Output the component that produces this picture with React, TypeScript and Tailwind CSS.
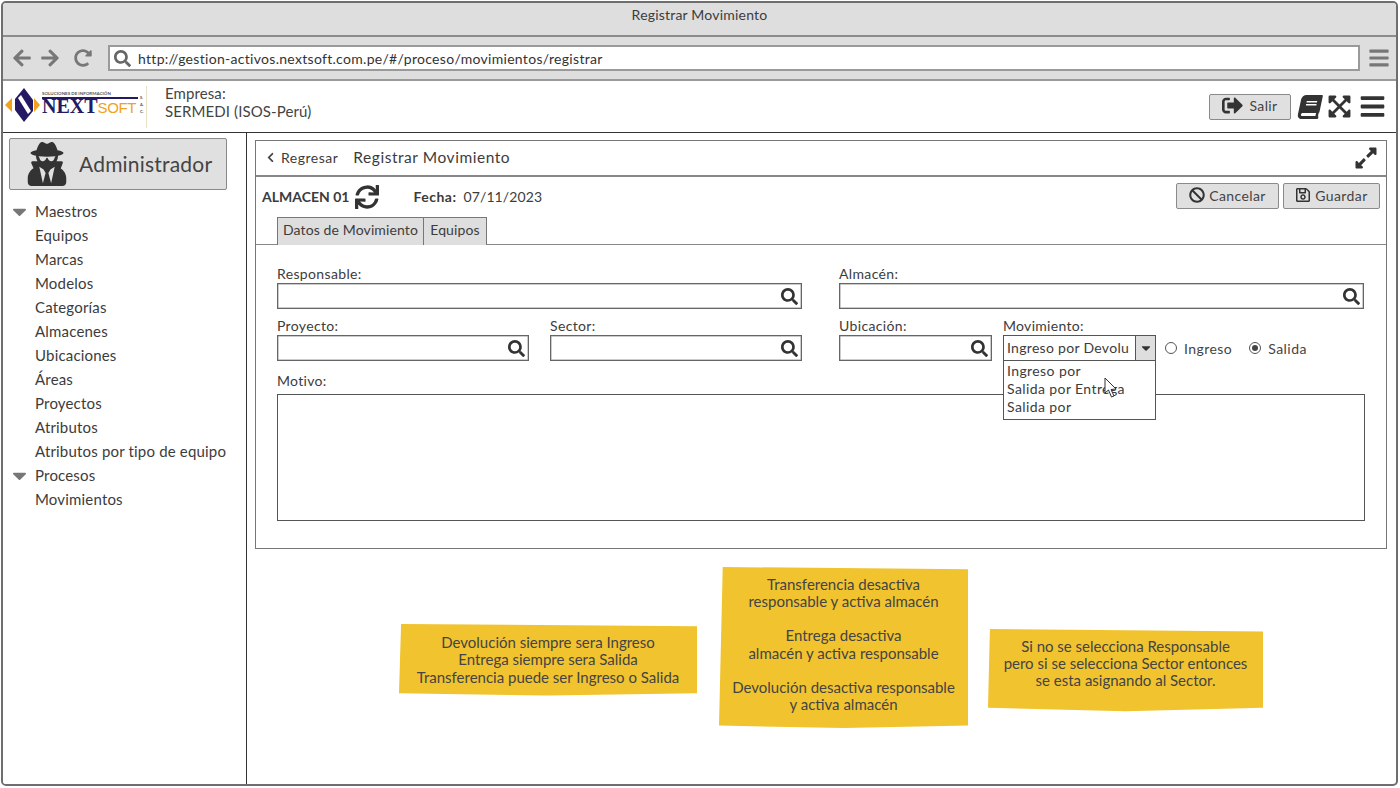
import type { ReactNode } from "react";
import {
  FaArrowLeft,
  FaArrowRight,
  FaBan,
  FaBars,
  FaBook,
  FaCaretDown,
  FaChevronLeft,
  FaExpandAlt,
  FaExpandArrowsAlt,
  FaRedoAlt,
  FaRegSave,
  FaSearch,
  FaSignOutAlt,
  FaSync,
  FaUserSecret,
} from "react-icons/fa";

const menuMaestros = [
  "Equipos",
  "Marcas",
  "Modelos",
  "Categorías",
  "Almacenes",
  "Ubicaciones",
  "Áreas",
  "Proyectos",
  "Atributos",
  "Atributos por tipo de equipo",
];

function SearchField({ label, className }: { label: string; className: string }) {
  return (
    <div className={className}>
      <div className="h-[18px] text-[14px] leading-[18px] tracking-[0.35px]">{label}</div>
      <div className="flex h-[26px] items-center justify-end border border-[#666] bg-white pr-[3px] shadow-[inset_0_0_0_0.5px_#999]">
        <FaSearch className="text-[17px] text-[#333]" />
      </div>
    </div>
  );
}

function GrayButton({ children, className }: { children: ReactNode; className: string }) {
  return (
    <button className={`flex items-center justify-center rounded-[2px] border border-[#8a8a8a] bg-[#e0e0e0] pb-[2px] text-[14px] tracking-[0.4px] text-[#444] ${className}`}>
      {children}
    </button>
  );
}

function Note({ className, children }: { className: string; children: ReactNode }) {
  return (
    <div className={`flex flex-col items-center justify-center bg-[#f1c32e] text-center text-[15px] leading-[17.3px] text-[#444] ${className}`}>
      {children}
    </div>
  );
}

export default function App() {
  return (
    <div className="h-[788px] w-[1400px] overflow-hidden bg-white p-[1px] font-['Lato','Liberation_Sans',sans-serif] text-[#3c3c3c]">
      <div className="flex h-[785px] w-[1397px] flex-col overflow-hidden rounded-[5px] border-2 border-[#6e6e6e]">
        {/* browser chrome */}
        <div className="flex h-[34px] shrink-0 items-center justify-center border-b-2 border-[#8c8c8c] bg-[#dedede] pb-[9px] text-[14px] tracking-[0.2px]">
          Registrar Movimiento
        </div>
        <div className="flex h-[44px] shrink-0 items-center border-b-2 border-[#9a9a9a] bg-[#dedede]">
          <FaArrowLeft className="ml-[9px] text-[20px] text-[#777]" />
          <FaArrowRight className="ml-[8px] text-[20px] text-[#777]" />
          <FaRedoAlt className="ml-[14px] text-[18px] text-[#777]" />
          <div className="ml-[16px] flex h-[26px] w-[1252px] items-center border-2 border-[#9a9a9a] bg-white pl-[4px] text-[14px] tracking-[0.3px] text-[#333]">
            <FaSearch className="mr-[7px] text-[17px] text-[#666]" />
            http://gestion-activos.nextsoft.com.pe/#/proceso/movimientos/registrar
          </div>
          <FaBars className="ml-[8px] text-[22px] text-[#777]" />
        </div>

        {/* app header */}
        <div className="flex h-[52px] shrink-0 items-center border-b border-[#333] bg-white">
          <div className="flex h-[42px] w-[144px] items-center border-r border-[#eadfc4] pb-[4px] pl-[2px]">
            <svg width="35" height="36" viewBox="0 0 35 36" className="shrink-0">
              <polygon points="0,18 7,11 7,25" fill="#f2a11d" />
              <polygon points="35,18 29,11 29,25" fill="#f2a11d" />
              <polygon points="19,1 28,13 28,24 19,35 10,23 10,12" fill="#231a63" />
              <polygon points="13,11 16,8 26,24 23,27" fill="#fff" />
            </svg>
            <div className="ml-[2px] flex w-[96px] flex-col leading-none">
              <span className="border-b-2 border-[#231a63] pb-[1px] text-[4.5px] font-bold whitespace-nowrap text-[#555]">SOLUCIONES DE INFORMACIÓN</span>
              <span className="-mt-[2px] font-['Liberation_Serif',serif] text-[20px] leading-[18px] font-bold whitespace-nowrap text-[#231a63]">
                NEXT<span className="font-['Liberation_Sans',sans-serif] text-[15px] font-normal tracking-[-0.4px] text-[#f2a11d]">SOFT</span>
              </span>
            </div>
            <div className="ml-[2px] flex flex-col text-[4px] leading-[7px] font-bold text-[#555]">
              <span>S.</span>
              <span>A.</span>
              <span>C.</span>
            </div>
          </div>
          <div className="ml-[18px] pb-[9px] text-[15px] leading-[18.5px] tracking-[0.1px] text-[#444]">
            <div>Empresa:</div>
            <div>SERMEDI (ISOS-Perú)</div>
          </div>
          <div className="ml-auto flex items-center">
            <GrayButton className="h-[26px] w-[82px] gap-[6px]">
              <FaSignOutAlt className="text-[21px] text-[#333]" />
              Salir
            </GrayButton>
            <FaBook className="ml-[7px] -skew-x-12 text-[24px] text-[#333]" />
            <FaExpandArrowsAlt className="ml-[5px] text-[25px] text-[#333]" />
            <FaBars className="mr-[10px] ml-[7px] text-[27px] text-[#333]" />
          </div>
        </div>

        <div className="flex min-h-0 flex-1">
          {/* sidebar */}
          <aside className="w-[244px] shrink-0 border-r border-[#333] bg-white">
            <div className="mt-[5px] ml-[6px] flex h-[52px] w-[218px] items-center rounded-[2px] border border-[#8a8a8a] bg-[#e0e0e0]">
              <FaUserSecret className="ml-[15px] text-[44px] text-[#333]" />
              <span className="ml-[10px] text-[21px] tracking-[0.2px] text-[#444]">Administrador</span>
            </div>
            <div className="mt-[9px] text-[15px] leading-[24px] tracking-[0.18px]">
              <div className="flex items-center">
                <FaCaretDown className="ml-[9px] w-[15px] scale-[1.5] text-[#777]" />
                <span className="ml-[8px]">Maestros</span>
              </div>
              {menuMaestros.map((m) => (
                <div key={m} className="pl-[32px] whitespace-nowrap">{m}</div>
              ))}
              <div className="flex items-center">
                <FaCaretDown className="ml-[9px] w-[15px] scale-[1.5] text-[#777]" />
                <span className="ml-[8px]">Procesos</span>
              </div>
              <div className="pl-[32px]">Movimientos</div>
            </div>
          </aside>

          {/* content */}
          <main className="min-w-0 flex-1 pt-[7px] pl-[8px]">
            <section className="h-[409px] w-[1132px] border border-[#777]">
              <div className="flex h-[36px] items-center border-b-2 border-[#888] pb-[1px] pl-[9px]">
                <FaChevronLeft className="text-[11px] text-[#444]" />
                <span className="ml-[5px] text-[14px] tracking-[0.5px]">Regresar</span>
                <span className="ml-[15px] text-[15.5px] tracking-[0.55px]">Registrar Movimiento</span>
                <FaExpandAlt className="mr-[8px] ml-auto text-[24px] text-[#333]" />
              </div>

              <div className="h-[68px] border-b border-[#888]">
                <div className="flex h-[40px] items-center pb-[2px] pl-[6px]">
                  <span className="text-[14px] font-bold">ALMACEN 01</span>
                  <FaSync className="mt-[2px] ml-[6px] text-[24px] text-[#333]" />
                  <span className="ml-[34px] text-[14px] font-bold tracking-[0.5px]">Fecha:</span>
                  <span className="ml-[7px] text-[14px] tracking-[0.1px]">07/11/2023</span>
                  <GrayButton className="ml-auto h-[26px] w-[103px] gap-[4px]">
                    <FaBan className="text-[16px] text-[#333]" />
                    Cancelar
                  </GrayButton>
                  <GrayButton className="mr-[6px] ml-[4px] h-[26px] w-[97px] gap-[4px]">
                    <FaRegSave className="text-[16px] text-[#333]" />
                    Guardar
                  </GrayButton>
                </div>
                <div className="ml-[21px] flex h-[28px] text-[14px] tracking-[0.12px]">
                  <div className="flex w-[147px] items-center justify-center border border-b-0 border-[#777] bg-[#dedede] pb-[5px]">Datos de Movimiento</div>
                  <div className="flex w-[63px] items-center justify-center border border-b-0 border-l-0 border-[#777] bg-[#dedede] pb-[5px]">Equipos</div>
                </div>
              </div>

              <div className="pt-[20px] pl-[21px]">
                <div className="flex">
                  <SearchField label="Responsable:" className="w-[525px]" />
                  <SearchField label="Almacén:" className="ml-[37px] w-[525px]" />
                </div>
                <div className="mt-[8px] flex">
                  <SearchField label="Proyecto:" className="w-[252px]" />
                  <SearchField label="Sector:" className="ml-[21px] w-[252px]" />
                  <SearchField label="Ubicación:" className="ml-[37px] w-[153px]" />
                  <div className="relative ml-[11px] w-[153px]">
                    <div className="h-[18px] text-[14px] leading-[18px] tracking-[0.3px]">Movimiento:</div>
                    <div className="flex h-[26px] border border-[#555] bg-white text-[14px] tracking-[0.3px]">
                      <span className="flex-1 overflow-hidden pl-[3px] leading-[24px] whitespace-nowrap">Ingreso por Devolu</span>
                      <span className="flex w-[20px] shrink-0 items-center justify-center border-l border-[#555] bg-[#dedede]">
                        <FaCaretDown className="text-[14px] text-[#333]" />
                      </span>
                    </div>
                    <div className="absolute top-[44px] left-0 z-10 h-[59px] w-[153px] border border-t-0 border-[#555] bg-white pt-[1px] pl-[3px] text-[14px] leading-[18px] tracking-[0.4px]">
                      <div>Ingreso por</div>
                      <div>Salida por Entrega</div>
                      <div>Salida por</div>
                      <svg width="16" height="22" viewBox="0 0 16 22" className="absolute top-[16px] left-[100px]">
                        <path d="M1 1 L1 16 L4.5 13 L7.5 20 L10 19 L7 12.5 L12 12 Z" fill="#fff" stroke="#333" strokeWidth="1" />
                      </svg>
                    </div>
                  </div>
                  <div className="mt-[18px] ml-[9px] flex h-[26px] items-center text-[14px] tracking-[0.45px] text-[#444]">
                    <span className="h-[12px] w-[12px] rounded-full border border-[#555] bg-white" />
                    <span className="ml-[7px]">Ingreso</span>
                    <span className="ml-[17px] flex h-[12px] w-[12px] items-center justify-center rounded-full border border-[#555] bg-white">
                      <span className="h-[6px] w-[6px] rounded-full bg-[#444]" />
                    </span>
                    <span className="ml-[7px]">Salida</span>
                  </div>
                </div>
                <div className="mt-[11px] h-[18px] text-[14px] leading-[18px] tracking-[0.3px]">Motivo:</div>
                <div className="mt-[4px] h-[127px] w-[1088px] border border-[#555] bg-white" />
              </div>
            </section>

            {/* sticky notes */}
            <div className="flex items-start">
              <Note className="mt-[75px] ml-[144px] h-[73px] w-[298px] pb-[1px] [clip-path:polygon(0.7%_0%,100%_3%,100%_95%,50%_98%,0%_95%)]">
                <div>Devolución siempre sera Ingreso</div>
                <div>Entrega siempre sera Salida</div>
                <div>Transferencia puede ser Ingreso o Salida</div>
              </Note>
              <Note className="mt-[18px] ml-[22px] h-[161px] w-[249px] pb-[6px] [clip-path:polygon(1.5%_0%,100%_1.4%,100%_98.5%,50%_100%,0%_98.5%)]">
                <div>Transferencia desactiva</div>
                <div>responsable y activa almacén</div>
                <div className="h-[17px]" />
                <div>Entrega desactiva</div>
                <div>almacén y activa responsable</div>
                <div className="h-[17px]" />
                <div>Devolución desactiva responsable</div>
                <div>y activa almacén</div>
              </Note>
              <Note className="mt-[80px] ml-[20px] h-[83px] w-[275px] pb-[14px] [clip-path:polygon(0.7%_0%,100%_3%,100%_95%,50%_99%,0%_95%)]">
                <div>Si no se selecciona Responsable</div>
                <div>pero si se selecciona Sector entonces</div>
                <div>se esta asignando al Sector.</div>
              </Note>
            </div>
          </main>
        </div>
      </div>
    </div>
  );
}
